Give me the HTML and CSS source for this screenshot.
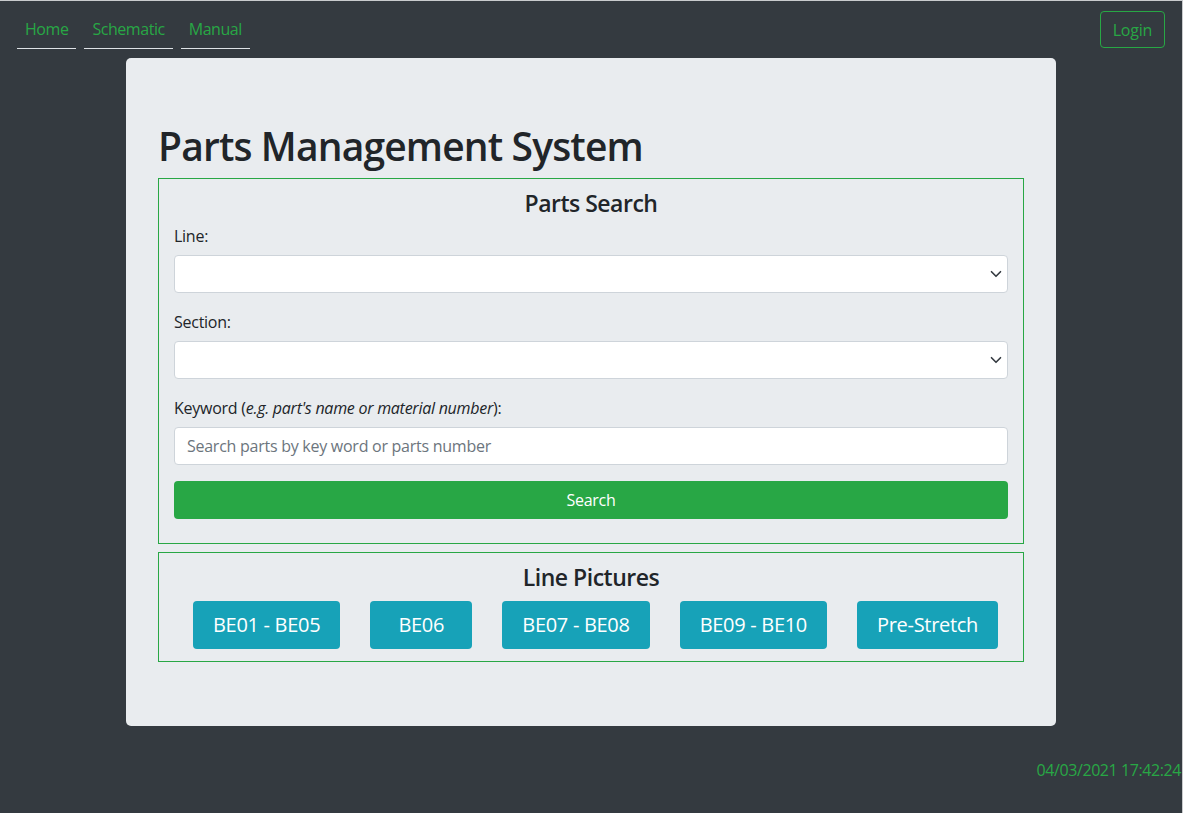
FILE: index.html
```html
<!DOCTYPE html>
<html lang="en">
<head>
<meta charset="utf-8">
<title>Parts Management System</title>
<link rel="stylesheet" href="styles.css">
</head>
<body>
<div class="page">
  <nav class="topnav">
    <div class="navlinks">
      <a class="navlink" href="#">Home</a>
      <a class="navlink" href="#">Schematic</a>
      <a class="navlink" href="#">Manual</a>
    </div>
    <button class="btn-login">Login</button>
  </nav>
  <main class="container">
    <div class="jumbo">
      <h1 class="title">Parts Management System</h1>
      <section class="panel">
        <h2 class="panel-title">Parts Search</h2>
        <div class="field">
          <label class="label">Line:</label>
          <div class="select-wrap">
            <select class="control"><option></option></select>
            <svg class="chev" width="12" height="12" viewBox="0 0 16 16"><path d="M2 5l6 6 6-6" fill="none" stroke="#343a40" stroke-width="2.2" stroke-linecap="round" stroke-linejoin="round"/></svg>
          </div>
        </div>
        <div class="field">
          <label class="label">Section:</label>
          <div class="select-wrap">
            <select class="control"><option></option></select>
            <svg class="chev" width="12" height="12" viewBox="0 0 16 16"><path d="M2 5l6 6 6-6" fill="none" stroke="#343a40" stroke-width="2.2" stroke-linecap="round" stroke-linejoin="round"/></svg>
          </div>
        </div>
        <div class="field field-last">
          <label class="label">Keyword (<em>e.g. part's name or material number</em>):</label>
          <input class="control" type="text" placeholder="Search parts by key word or parts number">
        </div>
        <button class="btn-search">Search</button>
      </section>
      <section class="panel panel-pics">
        <h2 class="panel-title">Line Pictures</h2>
        <div class="pic-row">
          <button class="btn-info">BE01 - BE05</button>
          <button class="btn-info">BE06</button>
          <button class="btn-info">BE07 - BE08</button>
          <button class="btn-info">BE09 - BE10</button>
          <button class="btn-info">Pre-Stretch</button>
        </div>
      </section>
    </div>
  </main>
  <div class="clock">04/03/2021 17:42:24</div>
</div>
</body>
</html>
```
FILE: styles.css
```css
* { box-sizing: border-box; }
html, body { margin: 0; padding: 0; }
body {
  background: #343a40;
  font-family: "Open Sans", "Noto Sans", sans-serif;
  color: #212529;
  font-size: 16px;
  line-height: 1.5;
  letter-spacing: -0.26px;
}
.page {
  min-height: 813px;
  padding-right: 1px;
  box-shadow: inset 0 1px 0 #c9cbcd, inset -1px 0 0 #c9cbcd;
}
.topnav {
  display: flex;
  justify-content: space-between;
  align-items: flex-start;
  padding: 10px 17px 0 17px;
}
.navlinks { display: flex; gap: 8px; }
.navlink {
  color: #28a745;
  text-decoration: none;
  padding: 7px 8px 7px;
  border-bottom: 1px solid #dee2e6;
  line-height: 24px;
  letter-spacing: -0.45px;
}
.btn-login {
  margin-top: 1px;
  font: inherit;
  letter-spacing: inherit;
  color: #28a745;
  background: transparent;
  border: 1px solid #28a745;
  border-radius: 4px;
  height: 37px;
  padding: 0 12px;
}
.container {
  width: 930px;
  margin: 9px auto 0;
}
.jumbo {
  background: #e9ecef;
  border-radius: 5px;
  padding: 64px 32px;
}
.title {
  margin: 0 0 8px;
  font-size: 39px;
  font-weight: 600;
  line-height: 48px;
  letter-spacing: -0.85px;
}
.panel {
  border: 1px solid #28a745;
  padding: 8px 15px 24px;
}
.panel + .panel { margin-top: 8px; }
.panel-title {
  margin: 0 0 5px;
  text-align: center;
  font-size: 23px;
  font-weight: 600;
  line-height: 32px;
  letter-spacing: -0.5px;
}
.field { margin-bottom: 17px; }
.field-last { margin-bottom: 16px; }
.label {
  display: block;
  margin-bottom: 7px;
  font-size: 16px;
  line-height: 24px;
}
.label em { font-style: italic; }
.select-wrap { position: relative; }
.control {
  display: block;
  width: 100%;
  height: 38px;
  border: 1px solid #ced4da;
  border-radius: 4px;
  background: #fff;
  font: inherit;
  letter-spacing: inherit;
  color: #495057;
  padding: 6px 12px;
  -webkit-appearance: none;
  appearance: none;
}
.control::placeholder { color: #6c757d; }
.chev {
  position: absolute;
  right: 6px;
  top: 13px;
  pointer-events: none;
}
.btn-search {
  display: block;
  width: 100%;
  height: 38px;
  border: 0;
  border-radius: 4px;
  background: #28a745;
  color: #fff;
  font: inherit;
  letter-spacing: inherit;
}
.panel-pics { padding-bottom: 12px; }
.panel-pics .panel-title { margin-bottom: 8px; }
.pic-row {
  display: flex;
  justify-content: center;
  gap: 30px;
  padding-left: 9px;
}
.btn-info {
  height: 48px;
  min-width: 102px;
  padding: 0 20px;
  border: 0;
  border-radius: 4px;
  background: #17a2b8;
  color: #fff;
  font: inherit;
  font-size: 20px;
  letter-spacing: -0.3px;
}
.clock {
  margin-top: 32px;
  text-align: right;
  color: #28a745;
  padding-right: 1px;
  letter-spacing: -0.42px;
}
```
